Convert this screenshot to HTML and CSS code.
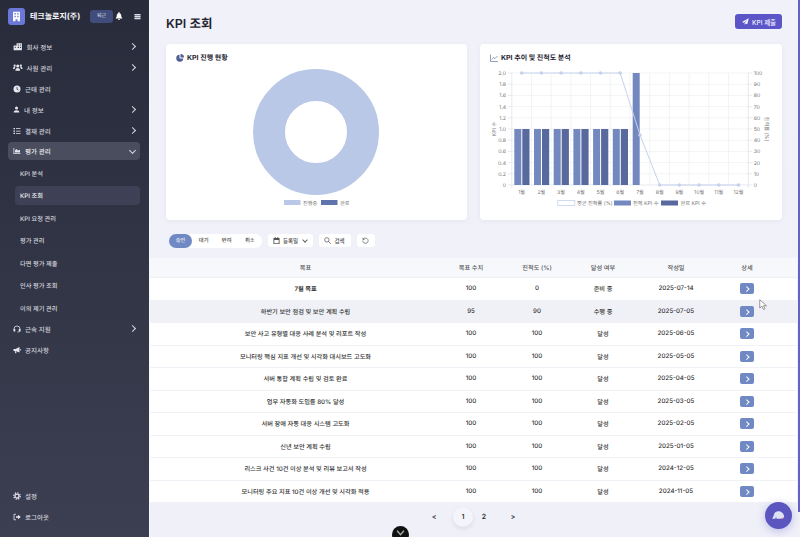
FILE: index.html
```html
<!DOCTYPE html>
<html lang="ko">
  <head>
    <meta charset="UTF-8" />
    <meta name="viewport" content="width=device-width, initial-scale=1.0" />
    <title>KPI 조회</title>
    <link rel="stylesheet" href="styles.css">
  </head>
  <body>
    <div class="app">
      <aside class="sidebar">
        <div class="brand">
          <div class="logo">
            <svg viewBox="0 0 16 16" width="11" height="11"><path fill="#fff" fill-rule="evenodd" d="M3 1h10v14H9.500v-3h-3v3H3zM5 3v2h2V3zM9 3v2h2V3zM5 7v2h2V7zM9 7v2h2V7z"/></svg>
          </div>
          <span class="brand-name">테크놀로지(주)</span>
          <span class="badge">퇴근</span>
          <svg class="bell" viewBox="0 0 16 16" width="8" height="8"><path fill="#fff" d="M8 0a1.500 1.500 0 0 0-1 2.500C4.500 3 3.500 5 3.500 7.500c0 2.500-1 3.500-2 4.500v1h13v-1c-1-1-2-2-2-4.500C12.500 5 11.500 3 9 2.500A1.500 1.500 0 0 0 8 0zM6 14a2 2 0 0 0 4 0z"/></svg>
          <svg class="burger" viewBox="0 0 16 16" width="7" height="7"><path fill="#dfe0e8" d="M1 2h14v3H1zM1 6.500h14v3H1zM1 11h14v3H1z"/></svg>
        </div>

        <nav class="nav">
          <a class="nav-item">
            <svg viewBox="0 0 16 16" class="ico ico-w"><path fill-rule="evenodd" d="M1 6h5V2h9v12H1zM8 4v2h2V4zM12 4v2h1.500V4zM8 8v2h2V8zM12 8v2h1.500V8zM3 8v2h1.500V8z"/></svg>
            <span>회사 정보</span><i class="chev"></i>
          </a>
          <a class="nav-item">
            <svg viewBox="0 0 16 16" class="ico ico-w"><circle cx="8" cy="5" r="2.600"/><circle cx="2.800" cy="4.500" r="1.900"/><circle cx="13.200" cy="4.500" r="1.900"/><path d="M4 13c0-3 1.500-4.500 4-4.500s4 1.500 4 4.500zM0 10c0-2 1-3.500 3-3.500l1 .8C3 8 2.800 9 2.800 10zM16 10c0-2-1-3.500-3-3.500l-1 .8c1 .7 1.200 1.700 1.200 2.700z"/></svg>
            <span>사원 관리</span><i class="chev"></i>
          </a>
          <a class="nav-item">
            <svg viewBox="0 0 16 16" class="ico"><circle cx="8" cy="8" r="7"/><path fill="none" stroke="#2e3141" stroke-width="1.500" d="M8 4v4.500l3 1.500"/></svg>
            <span>근태 관리</span>
          </a>
          <a class="nav-item">
            <svg viewBox="0 0 16 16" class="ico ico-s"><circle cx="8" cy="4.500" r="3.500"/><path d="M1.500 15c0-4 2.500-5.500 6.500-5.500s6.500 1.500 6.500 5.500z"/></svg>
            <span>내 정보</span><i class="chev"></i>
          </a>
          <a class="nav-item">
            <svg viewBox="0 0 16 16" class="ico"><path d="M1 2h3v2.500H1zM6 2.500h9V4H6zM1 6.800h3v2.500H1zM6 7.300h9v1.500H6zM1 11.500h3V14H1zM6 12h9v1.500H6z"/></svg>
            <span>결재 관리</span><i class="chev"></i>
          </a>
          <a class="nav-item is-open">
            <svg viewBox="0 0 16 16" class="ico"><path d="M1 2h1.500v10.500H15V14H1zM4 11V6.500L7 4l3 3 4-1.500V11z"/></svg>
            <span>평가 관리</span><i class="chev chev-down"></i>
          </a>
          <div class="subnav">
            <a class="sub-item">KPI 분석</a>
            <a class="sub-item is-active">KPI 조회</a>
            <a class="sub-item">KPI 요청 관리</a>
            <a class="sub-item">평가 관리</a>
            <a class="sub-item">다면 평가 제출</a>
            <a class="sub-item">인사 평가 조회</a>
            <a class="sub-item">이의 제기 관리</a>
          </div>
          <a class="nav-item">
            <svg viewBox="0 0 16 16" class="ico"><path fill="none" stroke="#e6e7ee" stroke-width="1.600" d="M2 9V8a6 6 0 0 1 12 0v1M14 11c0 2-2 3-5 3"/><path d="M1 8h3.500v5H1zM11.500 8H15v5h-3.500z"/></svg>
            <span>근속 지원</span><i class="chev"></i>
          </a>
          <a class="nav-item">
            <svg viewBox="0 0 16 16" class="ico"><path d="M1 6h4l8-4v11L5 10H1zM3.500 10.500h2.500l1 4H4.500zM14 6h1.500v3H14z"/></svg>
            <span>공지사항</span>
          </a>
        </nav>

        <div class="side-foot">
          <a class="nav-item">
            <svg viewBox="0 0 16 16" class="ico"><circle cx="8" cy="8" r="6.500" fill="none" stroke="#e6e7ee" stroke-width="2.500" stroke-dasharray="2.500 2.600"/><circle cx="8" cy="8" r="4" fill="none" stroke="#e6e7ee" stroke-width="2.500"/></svg>
            <span>설정</span>
          </a>
          <a class="nav-item">
            <svg viewBox="0 0 16 16" class="ico"><path fill="none" stroke="#e6e7ee" stroke-width="1.600" d="M6 2.500H2v11h4"/><path d="M6 6.500h4V3.500L15.500 8 10 12.500v-3H6z"/></svg>
            <span>로그아웃</span>
          </a>
        </div>
      </aside>

      <main class="main">
        <div class="top">
          <header class="page-head">
            <h1>KPI 조회</h1>
            <button class="submit">
              <svg viewBox="0 0 16 16" width="7" height="7"><path fill="#fff" d="M15.500.5 0 9l4.500 2L13 3.500 6 12v3.500l2.500-3 3.500 1.500z"/></svg>
              KPI 제출
            </button>
          </header>

          <section class="cards">
            <div class="card">
              <h2>
                <svg viewBox="0 0 16 16" width="8" height="8"><path fill="#4f5f92" d="M7 1.500a7 7 0 1 0 7.500 7.500H7z"/><path fill="#4f5f92" d="M9 0v7h7a7 7 0 0 0-7-7z"/></svg>
                KPI 진행 현황
              </h2>
              <svg class="chart" viewBox="0 0 301 154" width="301" height="154">
                <circle cx="150" cy="66" r="47" fill="none" stroke="#bac8e8" stroke-width="32"/>
                <rect x="118" y="134" width="16.500" height="5" fill="#bac8e8"/>
                <text x="137" y="139" class="lbl">진행중</text>
                <rect x="155" y="134" width="16.500" height="5" fill="#5f74ad"/>
                <text x="174" y="139" class="lbl">완료</text>
              </svg>
            </div>

            <div class="card">
              <h2>
                <svg viewBox="0 0 16 16" width="8" height="8"><path fill="none" stroke="#4f5f92" stroke-width="1.200" d="M1 1v14h15M3.500 11l3.500-4 3 2 5-5"/></svg>
                KPI 추이 및 진척도 분석
              </h2>
              <svg class="chart" viewBox="0 0 302 154" width="302" height="154">
                <path class="grid" d="M31.800 7H268.300M31.800 18.200H268.300M31.800 29.400H268.300M31.800 40.600H268.300M31.800 51.800H268.300M31.800 63H268.300M31.800 74.200H268.300M31.800 85.400H268.300M31.800 96.600H268.300M31.800 107.800H268.300M51.500 7V119M71.200 7V119M90.900 7V119M110.600 7V119M130.300 7V119M150 7V119M169.700 7V119M189.400 7V119M209.100 7V119M228.800 7V119M248.500 7V119"/>
                <path class="axis" d="M27.800 7H31.800V122M27.800 18.200H31.800M27.800 29.400H31.800M27.800 40.600H31.800M27.800 51.800H31.800M27.800 63H31.800M27.800 74.200H31.800M27.800 85.400H31.800M27.800 96.600H31.800M27.800 107.800H31.800M27.800 119H272.300M268.300 7V122M268.300 7H272.300M268.300 18.200H272.300M268.300 29.400H272.300M268.300 40.600H272.300M268.300 51.800H272.300M268.300 63H272.300M268.300 74.200H272.300M268.300 85.400H272.300M268.300 96.600H272.300M268.300 107.800H272.300"/>

                <g fill="#7288bf">
                  <rect x="34.300" y="63" width="7" height="56"/><rect x="54" y="63" width="7" height="56"/><rect x="73.700" y="63" width="7" height="56"/><rect x="93.400" y="63" width="7" height="56"/><rect x="113.100" y="63" width="7" height="56"/><rect x="132.800" y="63" width="7" height="56"/><rect x="152.700" y="7" width="7" height="112"/>
                </g>
                <g fill="#58699e">
                  <rect x="42.300" y="63" width="7.200" height="56"/><rect x="62" y="63" width="7.200" height="56"/><rect x="81.700" y="63" width="7.200" height="56"/><rect x="101.400" y="63" width="7.200" height="56"/><rect x="121.100" y="63" width="7.200" height="56"/><rect x="140.800" y="63" width="7.200" height="56"/>
                </g>

                <polyline class="trend" points="41.700,7 61.400,7 81.100,7 100.800,7 120.500,7 140.200,7 160,69 179.700,119 199.400,119 219.100,119 238.800,119 258.500,119"/>
                <g fill="#c6d2ec">
                  <circle cx="41.700" cy="7" r="1.800"/><circle cx="61.400" cy="7" r="1.800"/><circle cx="81.100" cy="7" r="1.800"/><circle cx="100.800" cy="7" r="1.800"/><circle cx="120.500" cy="7" r="1.800"/><circle cx="140.200" cy="7" r="1.800"/><circle cx="160" cy="69" r="1.800"/><circle cx="179.700" cy="119" r="1.800"/><circle cx="199.400" cy="119" r="1.800"/><circle cx="219.100" cy="119" r="1.800"/><circle cx="238.800" cy="119" r="1.800"/><circle cx="258.500" cy="119" r="1.800"/>
                </g>

                <g class="lbl" text-anchor="end">
                  <text x="26" y="9">2.0</text><text x="26" y="20.200">1.8</text><text x="26" y="31.400">1.6</text><text x="26" y="42.600">1.4</text><text x="26" y="53.800">1.2</text><text x="26" y="65">1.0</text><text x="26" y="76.200">0.8</text><text x="26" y="87.400">0.6</text><text x="26" y="98.600">0.4</text><text x="26" y="109.800">0.2</text><text x="26" y="121">0</text>
                </g>
                <g class="lbl">
                  <text x="273.700" y="9">100</text><text x="273.700" y="20.200">90</text><text x="273.700" y="31.400">80</text><text x="273.700" y="42.600">70</text><text x="273.700" y="53.800">60</text><text x="273.700" y="65">50</text><text x="273.700" y="76.200">40</text><text x="273.700" y="87.400">30</text><text x="273.700" y="98.600">20</text><text x="273.700" y="109.800">10</text><text x="273.700" y="121">0</text>
                </g>
                <g class="lbl" text-anchor="middle">
                  <text x="41.700" y="128">1월</text><text x="61.400" y="128">2월</text><text x="81.100" y="128">3월</text><text x="100.800" y="128">4월</text><text x="120.500" y="128">5월</text><text x="140.200" y="128">6월</text><text x="160" y="128">7월</text><text x="179.700" y="128">8월</text><text x="199.400" y="128">9월</text><text x="219.100" y="128">10월</text><text x="238.800" y="128">11월</text><text x="258.500" y="128">12월</text>
                  <text transform="translate(16 63) rotate(-90)">KPI 수</text>
                  <text transform="translate(285 63) rotate(90)">진척률 (%)</text>
                </g>

                <rect x="77.800" y="134.500" width="17" height="5" fill="#fff" stroke="#c6d2ec" stroke-width="0.800"/>
                <text x="97" y="139" class="lbl">평균 진척률 (%)</text>
                <rect x="134" y="134.500" width="17" height="5" fill="#7288bf"/>
                <text x="153" y="139" class="lbl">전체 KPI 수</text>
                <rect x="181" y="134.500" width="17" height="5" fill="#58699e"/>
                <text x="200.500" y="139" class="lbl">완료 KPI 수</text>
              </svg>
            </div>
          </section>

          <div class="filters">
            <div class="tabs">
              <span class="tab is-on">승인</span>
              <span class="tab">대기</span>
              <span class="tab">반려</span>
              <span class="tab">취소</span>
            </div>
            <button class="tool tool-date">
              <svg viewBox="0 0 16 16" width="7" height="7"><path fill="#555" fill-rule="evenodd" d="M4 0h2v2h4V0h2v2h3v14H1V2h3zM3 7v7h10V7z"/></svg>
              등록일
              <i class="caret"></i>
            </button>
            <button class="tool tool-search">
              <svg viewBox="0 0 16 16" width="7" height="7"><circle cx="6.500" cy="6.500" r="5" fill="none" stroke="#555" stroke-width="1.600"/><path stroke="#555" stroke-width="1.800" d="M10 10l5.500 5.500"/></svg>
              검색
            </button>
            <button class="tool tool-reset">
              <svg viewBox="0 0 16 16" width="7" height="7"><path fill="none" stroke="#555" stroke-width="1.600" d="M3.500 4.500A6 6 0 1 1 2 8"/><path fill="#555" d="M1.500 1v5h5z"/></svg>
            </button>
          </div>
        </div>

        <table class="kpi-table">
          <thead>
            <tr>
              <th class="c-goal">목표</th>
              <th class="c-num">목표 수치</th>
              <th class="c-prog">진척도 (%)</th>
              <th class="c-state">달성 여부</th>
              <th class="c-date">작성일</th>
              <th class="c-more">상세</th>
            </tr>
          </thead>
          <tbody>
            <tr><td class="c-goal strong">7월 목표</td><td>100</td><td>0</td><td>준비 중</td><td>2025-07-14</td><td class="c-more"><button class="go"><i></i></button></td></tr>
            <tr class="is-hover"><td class="c-goal">하반기 보안 점검 및 보안 계획 수립</td><td>95</td><td>90</td><td>수행 중</td><td>2025-07-05</td><td class="c-more"><button class="go"><i></i></button></td></tr>
            <tr><td class="c-goal">보안 사고 유형별 대응 사례 분석 및 리포트 작성</td><td>100</td><td>100</td><td>달성</td><td>2025-06-05</td><td class="c-more"><button class="go"><i></i></button></td></tr>
            <tr><td class="c-goal">모니터링 핵심 지표 개선 및 시각화 대시보드 고도화</td><td>100</td><td>100</td><td>달성</td><td>2025-05-05</td><td class="c-more"><button class="go"><i></i></button></td></tr>
            <tr><td class="c-goal">서버 통합 계획 수립 및 검토 완료</td><td>100</td><td>100</td><td>달성</td><td>2025-04-05</td><td class="c-more"><button class="go"><i></i></button></td></tr>
            <tr><td class="c-goal">업무 자동화 도입률 80% 달성</td><td>100</td><td>100</td><td>달성</td><td>2025-03-05</td><td class="c-more"><button class="go"><i></i></button></td></tr>
            <tr><td class="c-goal">서버 장애 자동 대응 시스템 고도화</td><td>100</td><td>100</td><td>달성</td><td>2025-02-05</td><td class="c-more"><button class="go"><i></i></button></td></tr>
            <tr><td class="c-goal">신년 보안 계획 수립</td><td>100</td><td>100</td><td>달성</td><td>2025-01-05</td><td class="c-more"><button class="go"><i></i></button></td></tr>
            <tr><td class="c-goal">리스크 사건 10건 이상 분석 및 리뷰 보고서 작성</td><td>100</td><td>100</td><td>달성</td><td>2024-12-05</td><td class="c-more"><button class="go"><i></i></button></td></tr>
            <tr><td class="c-goal">모니터링 주요 지표 10건 이상 개선 및 시각화 적용</td><td>100</td><td>100</td><td>달성</td><td>2024-11-05</td><td class="c-more"><button class="go"><i></i></button></td></tr>
          </tbody>
        </table>

        <div class="pager">
          <span class="pg pg-arrow">&lt;</span>
          <span class="pg pg-on">1</span>
          <span class="pg">2</span>
          <span class="pg pg-arrow pg-next">&gt;</span>
        </div>
      </main>

      <!-- things floating over the page -->
      <div class="thumb"></div>
      <svg class="cursor" viewBox="0 0 12 16" width="9" height="12"><path fill="#fff" stroke="#777" stroke-width="1" d="M1 1v11l3-2.500 2 4.500 2-1-2-4h4z"/></svg>
      <div class="scroll-down">
        <svg viewBox="0 0 16 16" width="9" height="9"><path fill="none" stroke="#aaa" stroke-width="2.500" d="M2 3l6 7 6-7"/></svg>
      </div>
      <div class="chat">
        <svg viewBox="0 0 24 24" width="15" height="15"><path fill="#dfe2f5" d="M12 5c-4 0-7 2.500-7.500 6.500L2 17h5l1-3 1 3h8c2 0 4-.5 4-3 0-5-4-9-9-9z"/><circle cx="17" cy="17.500" r="0.900" fill="#d8345f"/><circle cx="19.500" cy="16" r="0.900" fill="#d8345f"/></svg>
      </div>
    </div>
  </body>
</html>
```

FILE: styles.css
```css
* {
  box-sizing: border-box;
}

body {
  margin: 0;
  overflow: hidden;
  font-family: Inter, "Noto Sans CJK KR", sans-serif;
  text-rendering: geometricPrecision;
  color: #333;
}

.app {
  position: relative;
  display: flex;
  width: 800px;
  height: 537px;
  overflow: hidden;
  background: #f0f1f9;
}

/* sidebar */
.sidebar {
  display: flex;
  flex-direction: column;
  flex: 0 0 150px;
  height: 537px;
  border-right: 1px solid #f8f8fc;
  background: linear-gradient(180deg, #282b3a 0%, #3c3f51 100%);
  color: #dcdde5;
}

.brand {
  display: flex;
  align-items: center;
  height: 32px;
  padding: 0 0 0 8px;
}

.logo {
  display: flex;
  align-items: center;
  justify-content: center;
  width: 17px;
  height: 17px;
  border-radius: 3px;
  background: #6b78d8;
}

.brand-name {
  width: 60px;
  margin-left: 5px;
  font-size: 8px;
  font-weight: 700;
  color: #f4f4f8;
  white-space: nowrap;
}

.badge {
  width: 23px;
  height: 13px;
  line-height: 13px;
  border-radius: 3px;
  background: #404c7c;
  font-size: 5px;
  text-align: center;
  color: #e3e6f3;
}

.bell {
  margin-left: 2px;
}

.burger {
  margin-left: 11px;
}

.nav {
  flex: 1;
  padding-top: 4px;
}

.nav-item {
  display: flex;
  align-items: center;
  height: 21px;
  margin: 0 9px 0 8px;
  padding: 0 4px 0 5px;
  border-radius: 4px;
  font-size: 6.500px;
  font-weight: 500;
  color: #cfd0da;
}

.nav-item span {
  flex: 1;
  margin-left: 4px;
}

.nav-item.is-open {
  height: 18px;
  margin-top: 1px;
  margin-bottom: 2px;
  background: #4a4d5d;
  color: #eeeef3;
}

.ico {
  flex: none;
  width: 8px;
  height: 8px;
  fill: #e6e7ee;
}

.ico-w {
  width: 9.500px;
  height: 9.500px;
}

.ico-s {
  width: 7px;
  height: 7px;
}

.chev {
  display: block;
  width: 5px;
  height: 5px;
  margin-right: 1px;
  border-top: 1px solid #d7d8e0;
  border-right: 1px solid #d7d8e0;
  transform: rotate(45deg);
}

.chev-down {
  transform: translateY(-1px) rotate(135deg);
}

.subnav {
  display: flex;
  flex-direction: column;
  margin-bottom: -1.500px;
}

.sub-item {
  display: flex;
  align-items: center;
  height: 22.500px;
  margin: 0 9px 0 15px;
  padding-left: 5px;
  border-radius: 4px;
  font-size: 6.200px;
  font-weight: 500;
  color: #d6d7df;
}

.sub-item.is-active {
  height: 19px;
  margin-top: 1.750px;
  margin-bottom: 1.750px;
  background: #3e4155;
  color: #eeeef3;
}

.side-foot {
  padding-bottom: 10px;
}

/* main column */
.main {
  display: flex;
  flex-direction: column;
  flex: 1;
  min-width: 0;
  background: linear-gradient(180deg, #f1f2f9 0%, #eff0f8 100%);
}

.top {
  padding: 0 18px 0 16px;
}

.page-head {
  display: flex;
  align-items: center;
  justify-content: space-between;
  height: 44px;
}

.page-head h1 {
  margin: 0;
  font-size: 12.500px;
  font-weight: 600;
  color: #1f2330;
}

.submit {
  display: flex;
  align-items: center;
  gap: 3px;
  width: 47px;
  height: 15px;
  margin-top: -1px;
  padding: 0 0 0 7px;
  border: 0;
  border-radius: 3px;
  background: #5b55c8;
  font: 500 6.500px Inter, "Noto Sans CJK KR", sans-serif;
  color: #eef;
}

.cards {
  display: grid;
  grid-template-columns: 301px 302px;
  gap: 13px;
}

.card {
  height: 176px;
  border-radius: 4px;
  background: #fff;
  box-shadow: 0 1px 5px rgba(90, 95, 130, 0.08);
}

.card h2 {
  display: flex;
  align-items: center;
  gap: 3px;
  height: 22px;
  margin: 0;
  padding: 5px 0 0 10px;
  font-size: 7px;
  font-weight: 700;
  color: #1f2330;
}

.chart {
  display: block;
}

.lbl {
  font-size: 5.200px;
  fill: #777;
}

.grid {
  fill: none;
  stroke: #eeeff4;
  stroke-width: 0.700;
}

.axis {
  fill: none;
  stroke: #dfe1e8;
  stroke-width: 0.700;
}

.trend {
  fill: none;
  stroke: #c6d2ec;
  stroke-width: 1;
}

.filters {
  display: flex;
  align-items: center;
  gap: 6px;
  height: 15px;
  margin-top: 13px;
  padding-left: 3px;
}

.tabs {
  display: flex;
  width: 92.500px;
  height: 14px;
  border-radius: 7px;
  background: #fff;
}

.tab {
  width: 23.100px;
  line-height: 14px;
  border-radius: 7px;
  font-size: 5.300px;
  font-weight: 500;
  text-align: center;
  color: #444;
}

.tab.is-on {
  background: #7089c4;
  color: #e8ecf7;
}

.tool {
  display: flex;
  align-items: center;
  justify-content: center;
  gap: 3px;
  height: 13px;
  padding: 0;
  border: 0;
  border-radius: 3px;
  background: #fff;
  font: 500 5.500px Inter, "Noto Sans CJK KR", sans-serif;
  color: #555;
}

.tool-date {
  width: 45px;
}

.tool-search {
  width: 32px;
}

.tool-reset {
  width: 18px;
}

.caret {
  display: block;
  width: 4px;
  height: 4px;
  margin: -2px 0 0 2px;
  border-right: 1px solid #666;
  border-bottom: 1px solid #666;
  transform: rotate(45deg);
}

/* table */
.kpi-table {
  width: 647px;
  margin-top: 10px;
  border-collapse: collapse;
  table-layout: fixed;
  font-size: 6.200px;
}

.kpi-table th {
  height: 19.500px;
  padding: 0;
  border-bottom: 1.500px solid #eef0f5;
  background: #f7f8fc;
  font-weight: 500;
  color: #555;
}

.kpi-table td {
  height: 22.500px;
  padding: 0;
  border-bottom: 1px solid #f1f2f7;
  background: #fff;
  font-weight: 500;
  text-align: center;
  color: #333;
}

.kpi-table .is-hover td {
  background: #f0f1f7;
}

.kpi-table .strong {
  font-weight: 600;
}

.c-goal {
  width: 295px;
  padding-left: 16px !important;
}

.c-num {
  width: 52px;
}

.c-prog {
  width: 80px;
}

.c-state {
  width: 52px;
}

.c-date {
  width: 94px;
}

.c-more {
  width: 74px;
  padding-right: 26px !important;
}

.go {
  display: inline-flex;
  align-items: center;
  justify-content: center;
  width: 14px;
  height: 11px;
  padding: 0;
  border: 0;
  border-radius: 2px;
  vertical-align: middle;
  background: #7089c4;
}

.go i {
  display: block;
  width: 3.500px;
  height: 3.500px;
  margin-left: -1px;
  border-top: 1px solid #fff;
  border-right: 1px solid #fff;
  transform: rotate(45deg);
}

.pager {
  display: flex;
  align-items: center;
  height: 27px;
  margin-top: 0;
  padding-left: 274px;
  font-size: 7px;
  font-weight: 600;
  color: #333;
}

.pg {
  width: 20px;
  height: 20px;
  line-height: 20px;
  border-radius: 50%;
  text-align: center;
}

.pg-arrow {
  margin-right: 9px;
}

.pg-next {
  margin-right: 0;
  margin-left: 9px;
}

.pg-on {
  margin-right: 1px;
  background: #f4f5fb;
  box-shadow: 0 2px 4px rgba(90, 95, 130, 0.14);
}

/* floating bits */
.thumb {
  position: absolute;
  top: 0;
  right: 0;
  width: 2px;
  height: 512px;
  background: #6262c9;
}

.cursor {
  position: absolute;
  top: 299px;
  left: 759px;
}

.scroll-down {
  position: absolute;
  left: 392px;
  top: 526px;
  display: flex;
  justify-content: center;
  width: 17px;
  height: 17px;
  padding-top: 3px;
  border-radius: 50%;
  background: #111;
}

.chat {
  position: absolute;
  left: 765px;
  top: 502px;
  display: flex;
  align-items: center;
  justify-content: center;
  width: 27px;
  height: 27px;
  border-radius: 50%;
  background: #5b55c0;
  box-shadow: 0 2px 8px rgba(91, 85, 200, 0.35);
}
```
